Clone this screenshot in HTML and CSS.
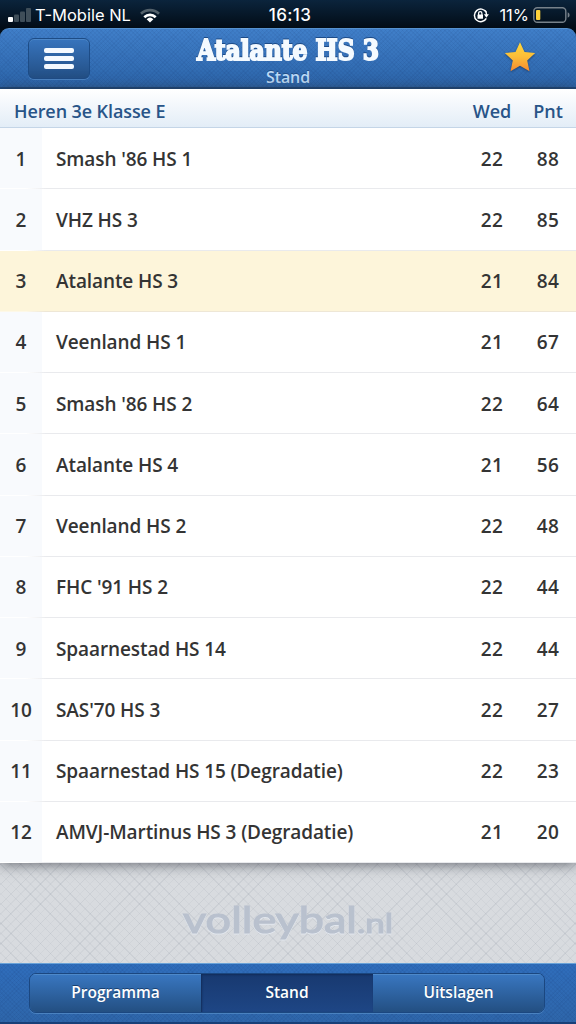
FILE: index.html
```html
<!DOCTYPE html>
<html lang="nl">
  <head>
    <meta charset="UTF-8" />
    <meta name="viewport" content="width=device-width,initial-scale=1.0" />
    <title>Atalante HS 3 - Stand</title>
    <link rel="stylesheet" href="styles.css">
  </head>
  <body>
    <div class="status-bar">
      <div class="status-left">
        <svg width="23" height="14" viewBox="0 0 23 14">
          <rect x="0" y="9" width="5" height="5" rx="1" fill="#fff" />
          <rect x="6" y="6.500" width="5" height="7.500" rx="1" fill="#3f4e59" />
          <rect x="12" y="3.500" width="5" height="10.500" rx="1" fill="#3f4e59" />
          <rect x="18" y="0" width="5" height="14" rx="1" fill="#3f4e59" />
        </svg>
        <span class="carrier">T-Mobile NL</span>
        <svg class="wifi" width="20" height="15" viewBox="0 0 20 15" fill="none" stroke-width="2.700">
          <path d="M1 5.800a13 13 0 0 1 18 0" stroke="#53616b" />
          <path d="M4.300 9.200a8.400 8.400 0 0 1 11.400 0" stroke="#fff" />
          <path d="M10 14.500L6.600 11.200a5 5 0 0 1 6.800 0z" fill="#fff" stroke="none" />
        </svg>
      </div>
      <div class="clock">16:13</div>
      <div class="status-right">
        <svg width="16" height="15" viewBox="0 0 16 15" fill="none" stroke="#fff" stroke-width="1.500">
          <path d="M13.200 4.200A6.300 6.300 0 1 0 13.300 10.300" />
          <path d="M12.200 2.500a6.300 6.300 0 0 1 1.300 4.500" />
          <path d="M10.900 6.300h5l-2.500 3.400z" fill="#fff" stroke="none" />
          <rect x="4.500" y="6.500" width="5.500" height="4.300" rx=".5" fill="#fff" stroke="none" />
          <path d="M5.600 7V5.200a1.650 1.650 0 0 1 3.300 0V7" stroke-width="1.200" />
        </svg>
        <span class="percent">11%</span>
        <svg width="37" height="16" viewBox="0 0 37 16">
          <rect x=".8" y=".8" width="32" height="14.400" rx="3.500" fill="none" stroke="#77818a" stroke-width="1.400" />
          <rect x="3" y="3" width="4.300" height="10" rx="1" fill="#ffd23a" />
          <path d="M34.700 5.200a3 3 0 0 1 0 5.600z" fill="#77818a" />
        </svg>
      </div>
    </div>
    <div class="header">
      <div class="menu-button">
        <span></span>
        <span></span>
        <span></span>
      </div>
      <div class="header-title">
        <svg class="title" width="186" height="29" viewBox="0 0 186 29">
          <text x="2" y="24" textLength="182" lengthAdjust="spacingAndGlyphs">Atalante HS 3</text>
        </svg>
        <div class="subtitle">Stand</div>
      </div>
      <svg class="star" width="34" height="34" viewBox="0 0 34 34">
        <defs>
          <linearGradient id="gold" x1="0" y1="0" x2="0" y2="1">
            <stop offset="0" stop-color="#ffd83c" />
            <stop offset=".5" stop-color="#fbbd38" />
            <stop offset="1" stop-color="#f58a30" />
          </linearGradient>
        </defs>
        <path d="M17 2.300L21.500 12l10.700 1.100-8 7.300 2.300 10.800L17 25.800l-9.500 5.400 2.300-10.800-8-7.300L12.500 12z" fill="url(#gold)" />
      </svg>
    </div>
    <div class="standings">
      <div class="table-head">
        <div class="league">Heren 3e Klasse E</div>
        <div class="played">Wed</div>
        <div class="points">Pnt</div>
      </div>
      <div class="row">
        <div class="rank">1</div>
        <div class="team">Smash '86 HS 1</div>
        <div class="played">22</div>
        <div class="points">88</div>
      </div>
      <div class="row">
        <div class="rank">2</div>
        <div class="team">VHZ HS 3</div>
        <div class="played">22</div>
        <div class="points">85</div>
      </div>
      <div class="row active">
        <div class="rank">3</div>
        <div class="team">Atalante HS 3</div>
        <div class="played">21</div>
        <div class="points">84</div>
      </div>
      <div class="row">
        <div class="rank">4</div>
        <div class="team">Veenland HS 1</div>
        <div class="played">21</div>
        <div class="points">67</div>
      </div>
      <div class="row">
        <div class="rank">5</div>
        <div class="team">Smash '86 HS 2</div>
        <div class="played">22</div>
        <div class="points">64</div>
      </div>
      <div class="row">
        <div class="rank">6</div>
        <div class="team">Atalante HS 4</div>
        <div class="played">21</div>
        <div class="points">56</div>
      </div>
      <div class="row">
        <div class="rank">7</div>
        <div class="team">Veenland HS 2</div>
        <div class="played">22</div>
        <div class="points">48</div>
      </div>
      <div class="row">
        <div class="rank">8</div>
        <div class="team">FHC '91 HS 2</div>
        <div class="played">22</div>
        <div class="points">44</div>
      </div>
      <div class="row">
        <div class="rank">9</div>
        <div class="team">Spaarnestad HS 14</div>
        <div class="played">22</div>
        <div class="points">44</div>
      </div>
      <div class="row">
        <div class="rank">10</div>
        <div class="team">SAS'70 HS 3</div>
        <div class="played">22</div>
        <div class="points">27</div>
      </div>
      <div class="row">
        <div class="rank">11</div>
        <div class="team">Spaarnestad HS 15 (Degradatie)</div>
        <div class="played">22</div>
        <div class="points">23</div>
      </div>
      <div class="row">
        <div class="rank">12</div>
        <div class="team">AMVJ-Martinus HS 3 (Degradatie)</div>
        <div class="played">21</div>
        <div class="points">20</div>
      </div>
    </div>
    <div class="backdrop">
      <svg class="logo" width="216" height="56" viewBox="0 0 216 56">
        <text x="3" y="38" font-size="36" textLength="174" lengthAdjust="spacingAndGlyphs">volleybal</text>
        <text x="177" y="38" font-size="26" textLength="36" lengthAdjust="spacingAndGlyphs">.nl</text>
      </svg>
    </div>
    <div class="footer">
      <div class="tabs">
        <div class="tab">Programma</div>
        <div class="tab selected">Stand</div>
        <div class="tab">Uitslagen</div>
      </div>
    </div>
  </body>
</html>
```
FILE: styles.css
```css
body {
  margin: 0;
  width: 576px;
  height: 1024px;
  display: flex;
  flex-direction: column;
  overflow: hidden;
  background-color: #020c16;
  font-family: "Open Sans", "Noto Sans", sans-serif;
  font-weight: 600;
}
.status-bar {
  height: 28px;
  flex: none;
  display: grid;
  grid-template-columns: 1fr 60px 1fr;
  align-items: center;
  padding-top: 2px;
  box-sizing: border-box;
  background: linear-gradient(#0b243c, #020c16);
  color: #fff;
  font-family: Inter, sans-serif;
  font-weight: 400;
  font-size: 17px;
}
.status-left,
.status-right {
  display: flex;
  align-items: center;
}
.status-left {
  padding-left: 8px;
}
.carrier {
  margin-left: 4px;
  font-size: 16.5px;
}
.wifi {
  margin-left: 9px;
}
.clock {
  padding-left: 4px;
  text-align: center;
  font-weight: 500;
  letter-spacing: 0.4px;
}
.status-right {
  justify-content: flex-end;
  padding-right: 6px;
}
.percent {
  margin: 0 4px 0 10px;
  font-size: 16.5px;
}
.header {
  box-sizing: border-box;
  height: 61px;
  flex: none;
  display: grid;
  grid-template-columns: 62px 1fr 34px;
  padding: 0 39px 0 28px;
  border-top: 1px solid #5591ce;
  border-bottom: 2px solid #1c477b;
  border-radius: 9px 9px 0 0;
  background:
    repeating-linear-gradient(45deg, rgba(0, 20, 70, 0.05) 0 1px, transparent 1px 3px),
    repeating-linear-gradient(-45deg, rgba(0, 20, 70, 0.05) 0 1px, transparent 1px 3px),
    linear-gradient(#407fc9, #2c65aa);
}
.menu-button {
  box-sizing: border-box;
  height: 41px;
  margin-top: 9px;
  padding-top: 9px;
  display: flex;
  flex-direction: column;
  align-items: center;
  gap: 3px;
  border: 1px solid #1d4c86;
  border-radius: 6px;
  background: linear-gradient(#3774bd, #234f85);
  box-shadow: inset 0 1px 0 #4c86c7, 0 1px 0 #4a82c2;
}
.menu-button span {
  width: 30px;
  height: 5px;
  border-radius: 2px;
  background-color: #f4f9ff;
}
.header-title {
  display: flex;
  flex-direction: column;
  align-items: center;
  padding-top: 7px;
  margin-left: -17px;
}
.title {
  flex: none;
  overflow: visible;
  fill: #f4faff;
  stroke: #f4faff;
  stroke-width: 2;
  font-family: "DejaVu Serif", serif;
  font-weight: 700;
  font-size: 27px;
  filter: drop-shadow(0 -1px 0 #1c4b88);
}
.subtitle {
  margin-top: 2px;
  line-height: 20px;
  color: #bddbf8;
  font-size: 16px;
  font-weight: 600;
  letter-spacing: -0.1px;
  text-shadow: 0 -1px 0 #214f88;
}
.star {
  margin-top: 11px;
  filter: drop-shadow(0 1px 1px #1c4174);
}
.standings {
  position: relative;
  z-index: 1;
  height: 774px;
  flex: none;
  display: flex;
  flex-direction: column;
  background-color: #fff;
  box-shadow: 0 1px 13px rgba(45, 50, 60, 0.7);
}
.table-head {
  box-sizing: border-box;
  height: 39px;
  flex: none;
  display: flex;
  align-items: center;
  padding: 5px 0 0 14px;
  border-bottom: 1px solid #c4d5e7;
  background: linear-gradient(#fff, #e3edf7);
  color: #285488;
  font-size: 18px;
  letter-spacing: -0.1px;
}
.league {
  flex: 1;
}
.row {
  box-sizing: border-box;
  flex: 1;
  display: flex;
  align-items: center;
  background:
    linear-gradient(90deg, #fff 26px, #e9eaed 46px) bottom / 100% 1px no-repeat,
    linear-gradient(90deg, #f8fafd 42px, #fff 42px);
  color: #343434;
  font-size: 19px;
  letter-spacing: -0.1px;
}
.row.active {
  background:
    linear-gradient(90deg, #fdf8e8 26px, #eee7d6 46px) bottom / 100% 1px no-repeat,
    #fdf5da;
}
.rank {
  width: 42px;
  text-align: center;
}
.team {
  flex: 1;
  margin-left: 14px;
}
.played {
  width: 56px;
  text-align: center;
}
.points {
  width: 56px;
  text-align: center;
}
.row .played,
.row .points {
  letter-spacing: 0.3px;
}
.backdrop {
  flex: 1;
  display: flex;
  justify-content: center;
  padding-top: 32px;
  background:
    repeating-linear-gradient(45deg, rgba(120, 130, 145, 0.12) 0 1px, transparent 1px 7px, rgba(120, 130, 145, 0.07) 7px 8px, transparent 8px 14px),
    repeating-linear-gradient(-45deg, rgba(120, 130, 145, 0.12) 0 1px, transparent 1px 7px, rgba(120, 130, 145, 0.07) 7px 8px, transparent 8px 14px),
    #d8dbdf;
}
.logo {
  flex: none;
  fill: #b9c1ce;
  stroke: #b9c1ce;
  stroke-width: 1.2;
  font-family: Lato, sans-serif;
  font-weight: 400;
  filter: drop-shadow(0 1px 0 #e2e7ee);
}
.footer {
  box-sizing: border-box;
  height: 61px;
  flex: none;
  padding: 9px 31px 0 29px;
  border-top: 1px solid #69a2d8;
  border-bottom: 2px solid #173f78;
  background:
    repeating-linear-gradient(45deg, rgba(0, 20, 70, 0.05) 0 1px, transparent 1px 3px),
    repeating-linear-gradient(-45deg, rgba(0, 20, 70, 0.05) 0 1px, transparent 1px 3px),
    linear-gradient(#2f6dbb, #2e66aa);
}
.tabs {
  box-sizing: border-box;
  height: 40px;
  display: grid;
  grid-template-columns: 1fr 172px 1fr;
  overflow: hidden;
  border: 1px solid #1b4780;
  border-radius: 7px;
  box-shadow: 0 1px 0 #4a82c0;
}
.tab {
  display: flex;
  align-items: center;
  justify-content: center;
  padding-bottom: 2px;
  background: linear-gradient(#3977c1, #234f82);
  box-shadow: inset 0 1px 0 #4e89c9;
  color: #fff;
  font-size: 15.5px;
  text-shadow: 0 -1px 0 #183f70;
}
.tab.selected {
  background: linear-gradient(#183970, #1e4685);
  box-shadow: inset 1px 1px 2px #122c59;
}
```
